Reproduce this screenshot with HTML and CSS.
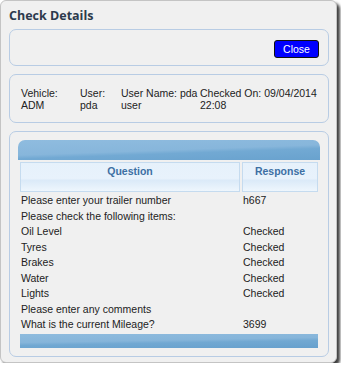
FILE: index.html
```html
<!DOCTYPE html>
<html lang="en">
<head>
    <meta charset="UTF-8">
    <title>Check Details</title>
    <link rel="stylesheet" href="styles.css">
</head>
<body>
<div class="dialog">
    <h1 class="dialog-title">Check Details</h1>

    <div class="panel toolbar">
        <button type="button" class="close-btn">Close</button>
    </div>

    <div class="panel summary">
        <div class="summary-cell">Vehicle: ADM</div>
        <div class="summary-cell">User: pda</div>
        <div class="summary-cell">User Name: pda user</div>
        <div class="summary-cell">Checked On: 09/04/2014 22:08</div>
    </div>

    <div class="panel results">
        <div class="grid-top"></div>
        <table class="grid">
            <thead>
                <tr>
                    <th>Question</th>
                    <th class="col-response">Response</th>
                </tr>
            </thead>
            <tbody>
                <tr><td>Please enter your trailer number</td><td>h667</td></tr>
                <tr><td>Please check the following items:</td><td></td></tr>
                <tr><td>Oil Level</td><td>Checked</td></tr>
                <tr><td>Tyres</td><td>Checked</td></tr>
                <tr><td>Brakes</td><td>Checked</td></tr>
                <tr><td>Water</td><td>Checked</td></tr>
                <tr><td>Lights</td><td>Checked</td></tr>
                <tr><td>Please enter any comments</td><td></td></tr>
                <tr><td>What is the current Mileage?</td><td>3699</td></tr>
            </tbody>
            <tfoot>
                <tr><td colspan="2" class="grid-foot"></td></tr>
            </tfoot>
        </table>
    </div>
</div>
</body>
</html>
```

FILE: styles.css
```css
body {
    margin: 0;
    background: #fff;
    font-family: "Liberation Sans", Arial, sans-serif;
    font-size: 10.5px;
    color: #222;
}
.dialog {
    width: 337px;
    height: 363px;
    box-sizing: border-box;
    background: #f0f0f0;
    border: 1px solid #c4c4c4;
    border-radius: 6px;
    box-shadow: 3px 3px 3px rgba(0, 0, 0, 0.75);
    padding: 0 7px 0 8px;
}
.dialog-title {
    margin: 0;
    height: 28px;
    line-height: 30px;
    font-family: "Open Sans", sans-serif;
    font-size: 12.5px;
    font-weight: bold;
    color: #2c3a4c;
}
.panel {
    border: 1px solid #b8cce4;
    border-radius: 7px;
    margin-bottom: 8px;
}
.toolbar {
    display: flex;
    justify-content: flex-end;
    padding: 10px 9px 7px;
}
.close-btn {
    width: 45px;
    height: 18px;
    padding: 0;
    background: #0000ff;
    color: #fff;
    border: 1px solid #111;
    border-radius: 3px;
    font-family: "Liberation Sans", Arial, sans-serif;
    font-size: 10.5px;
}
.summary {
    display: grid;
    grid-template-columns: 59px 41px 79px 118px;
    padding: 12px 11px 11px;
    line-height: 12px;
}
.results {
    padding: 8px 8px 6px;
}
.grid-top {
    height: 20px;
    border-radius: 7px 7px 0 0;
    background: linear-gradient(178deg, #8fbcdf 0%, #87b6db 50%, #72a9d3 62%, #69a2ce 100%);
}
.grid {
    width: 100%;
    border-spacing: 2px;
}
.grid th {
    height: 26px;
    padding: 2px 0 0;
    vertical-align: top;
    border: 1px solid #c5dbef;
    background: linear-gradient(#e6f1fb 0%, #e8f2fc 55%, #dbeaf8 62%, #eef6fd 100%);
    color: #3d6fa3;
    font-weight: bold;
    font-size: 10.5px;
}
.grid .col-response {
    width: 74px;
}
.grid td {
    height: 13.5px;
    padding: 0 0 0 1px;
    line-height: 13.5px;
}
.grid .grid-foot {
    height: 14px;
    padding: 0;
    background: linear-gradient(179deg, #8ebbde 0%, #86b5da 45%, #71a8d2 60%, #66a0cd 100%);
}
```
